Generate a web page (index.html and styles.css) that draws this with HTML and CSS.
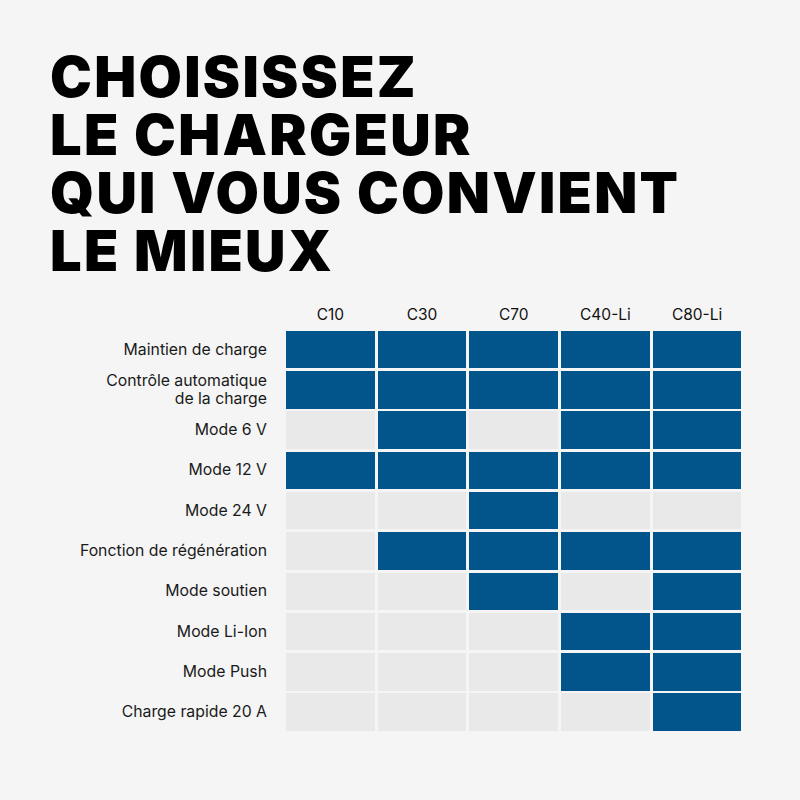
FILE: index.html
```html
<!DOCTYPE html>
<html lang="fr">
<head>
<meta charset="utf-8">
<title>Choisissez le chargeur</title>
<link rel="stylesheet" href="styles.css">
</head>
<body>
<div class="page">
  <h1 class="title">CHOISISSEZ<br>LE CHARGEUR<br>QUI VOUS CONVIENT<br>LE MIEUX</h1>
  <div class="chart">
    <div class="corner"></div>
    <div class="head">C10</div><div class="head">C30</div><div class="head">C70</div><div class="head">C40-Li</div><div class="head">C80-Li</div>

    <div class="label">Maintien de charge</div>
    <div class="cell on"></div><div class="cell on"></div><div class="cell on"></div><div class="cell on"></div><div class="cell on"></div>

    <div class="label">Contrôle automatique<br>de la charge</div>
    <div class="cell on"></div><div class="cell on"></div><div class="cell on"></div><div class="cell on"></div><div class="cell on"></div>

    <div class="label">Mode 6 V</div>
    <div class="cell"></div><div class="cell on"></div><div class="cell"></div><div class="cell on"></div><div class="cell on"></div>

    <div class="label">Mode 12 V</div>
    <div class="cell on"></div><div class="cell on"></div><div class="cell on"></div><div class="cell on"></div><div class="cell on"></div>

    <div class="label">Mode 24 V</div>
    <div class="cell"></div><div class="cell"></div><div class="cell on"></div><div class="cell"></div><div class="cell"></div>

    <div class="label">Fonction de régénération</div>
    <div class="cell"></div><div class="cell on"></div><div class="cell on"></div><div class="cell on"></div><div class="cell on"></div>

    <div class="label">Mode soutien</div>
    <div class="cell"></div><div class="cell"></div><div class="cell on"></div><div class="cell"></div><div class="cell on"></div>

    <div class="label">Mode Li-Ion</div>
    <div class="cell"></div><div class="cell"></div><div class="cell"></div><div class="cell on"></div><div class="cell on"></div>

    <div class="label">Mode Push</div>
    <div class="cell"></div><div class="cell"></div><div class="cell"></div><div class="cell on"></div><div class="cell on"></div>

    <div class="label">Charge rapide 20 A</div>
    <div class="cell"></div><div class="cell"></div><div class="cell"></div><div class="cell"></div><div class="cell on"></div>
  </div>
</div>
</body>
</html>
```
FILE: styles.css
```css
html, body {
  margin: 0;
  padding: 0;
  background: #f5f5f5;
}
.page {
  width: 800px;
  height: 800px;
  box-sizing: border-box;
  padding: 48px 0 0 50px;
  font-family: Inter, "Liberation Sans", sans-serif;
  color: #111;
}
.title {
  margin: 0;
  font-family: Inter, "Liberation Sans", sans-serif;
  font-weight: 900;
  font-size: 56px;
  line-height: 58px;
  letter-spacing: 2.3px;
  color: #000;
}
.chart {
  display: grid;
  grid-template-columns: 233px repeat(5, 88.7px);
  grid-template-rows: 28px repeat(10, 37.5px);
  column-gap: 3px;
  row-gap: 2.8px;
  margin-top: 20px;
}
.corner { }
.head {
  font-size: 15.5px;
  text-align: center;
  align-self: center;
  color: #111;
}
.label {
  font-size: 15.8px;
  line-height: 18px;
  text-align: right;
  align-self: center;
  padding-right: 16px;
  color: #1a1a1a;
}
.cell {
  background: #e9e9e9;
}
.cell.on {
  background: #02558b;
}
```
